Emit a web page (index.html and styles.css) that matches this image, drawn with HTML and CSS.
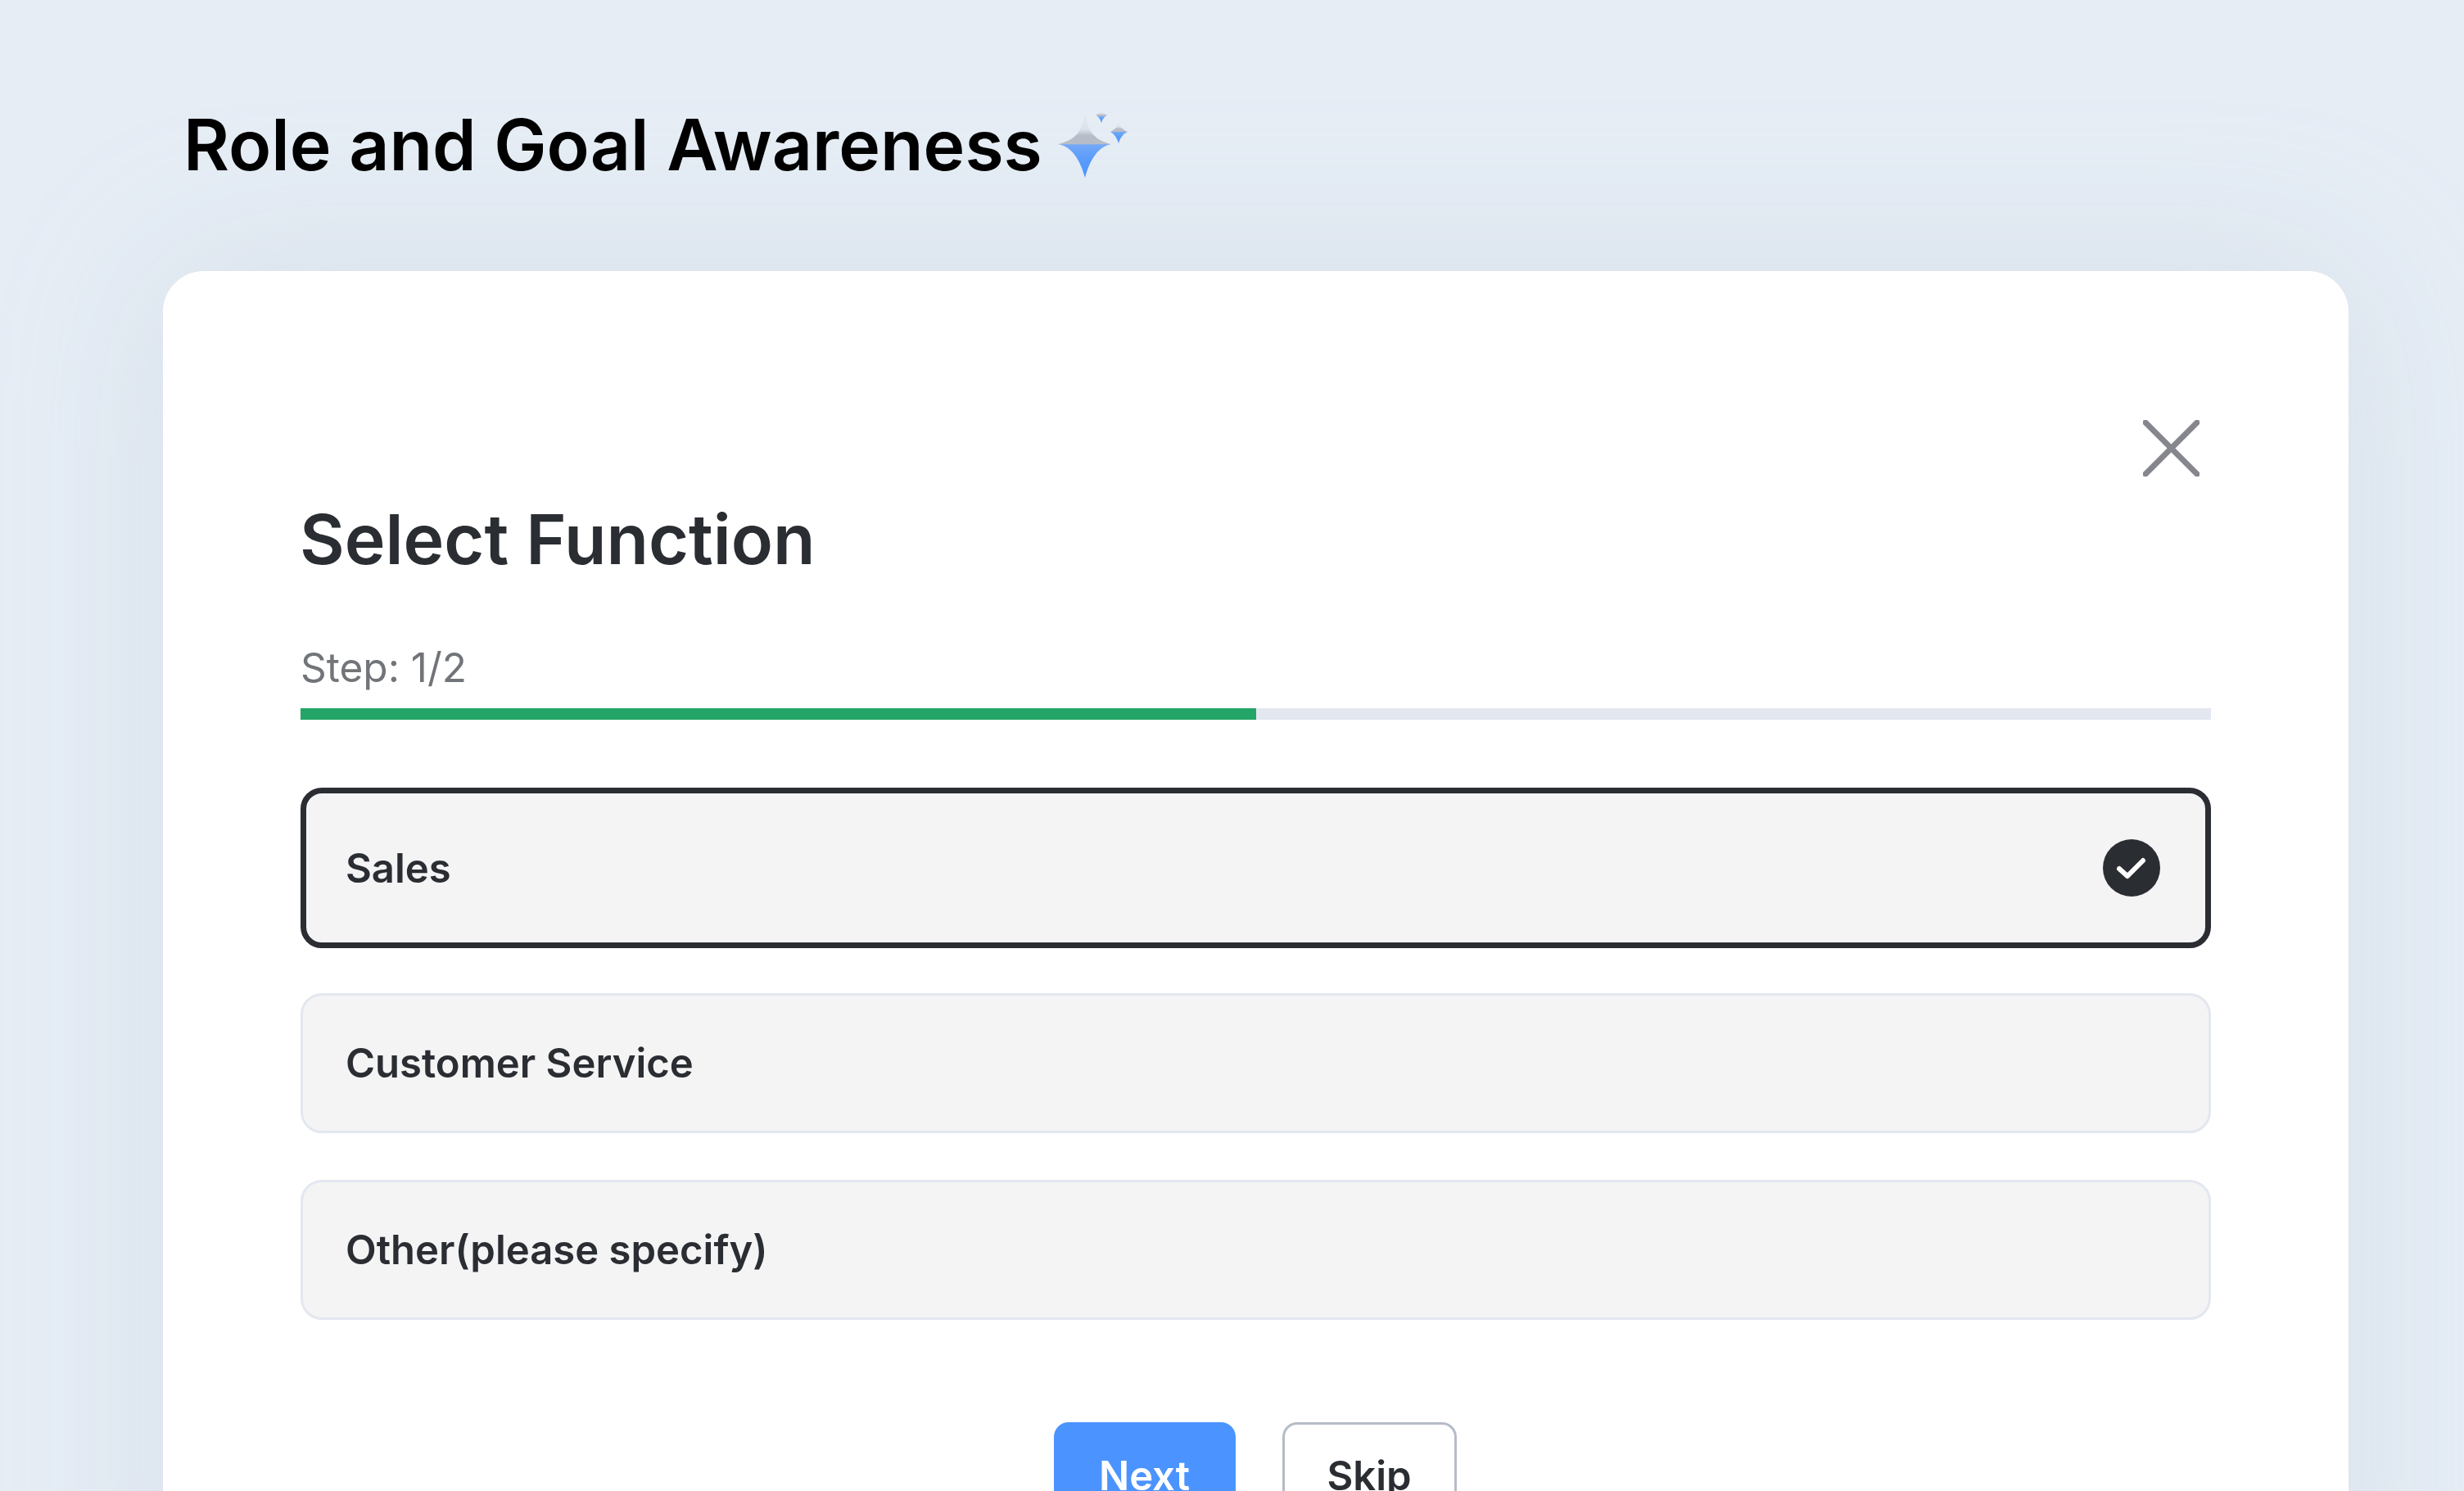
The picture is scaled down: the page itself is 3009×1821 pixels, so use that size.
FILE: index.html
```html
<!DOCTYPE html>
<html lang="en">
<head>
<meta charset="utf-8">
<title>Role and Goal Awareness</title>
<link rel="stylesheet" href="styles.css">
</head>
<body>
<main class="page">
  <header class="page-head">
    <h1 class="page-title">Role and Goal Awareness</h1>
    <svg class="sparkle" width="90" height="87" viewBox="0 0 90 87" aria-hidden="true">
      <defs>
        <linearGradient id="spark" x1="0" y1="0" x2="0" y2="1">
          <stop offset="0" stop-color="#e4e9f0"/>
          <stop offset="0.25" stop-color="#dde2ea"/>
          <stop offset="0.35" stop-color="#b7bdc8"/>
          <stop offset="0.48" stop-color="#b7bdc8"/>
          <stop offset="0.49" stop-color="#74a9f6"/>
          <stop offset="0.72" stop-color="#5a9cfc"/>
          <stop offset="1" stop-color="#4b94ff"/>
        </linearGradient>
      </defs>
      <path fill="url(#spark)" d="M36 5C39 27 47 38 68 43C52 46 42 62 36 84C30 62 20 46 3 43C25 38 33 27 36 5Z"/>
      <path fill="url(#spark)" d="M56 2C57 4 59 6 63 7.500C60 9 57.500 12 56 17C54.500 12 52 9 49 7.500C53 6 55 4 56 2Z"/>
      <path fill="url(#spark)" d="M77 15C78 21 81 25 88 28C83 30 79 35 77 42C75 35 71 30 67 28C73 25 76 21 77 15Z"/>
    </svg>
  </header>

  <section class="card">
    <div class="card-top">
      <svg class="close-icon" width="69" height="69" viewBox="0 0 69 69" aria-hidden="true">
        <path d="M3 3L66 66M66 3L3 66"/>
      </svg>
    </div>
    <h2 class="card-title">Select Function</h2>
    <p class="step-label">Step: 1/2</p>
    <div class="progress"><div class="progress-fill"></div></div>

    <div class="options">
      <div class="option option-selected">
        <span>Sales</span>
        <svg class="check" width="70" height="70" viewBox="0 0 70 70" aria-hidden="true">
          <circle cx="35" cy="35" r="35" fill="#2a2d32"/>
          <path d="M20 36L30 45L49 26" fill="none" stroke="#fff" stroke-width="6" stroke-linecap="round" stroke-linejoin="round"/>
        </svg>
      </div>
      <div class="option">Customer Service</div>
      <div class="option">Other(please specify)</div>
    </div>

    <div class="actions">
      <button class="btn btn-primary" type="button">Next</button>
      <button class="btn btn-secondary" type="button">Skip</button>
    </div>
  </section>
</main>
</body>
</html>
```
FILE: styles.css
```css
* { box-sizing: border-box; }

html, body {
  margin: 0;
  height: 100%;
  overflow: hidden;
}

body {
  background: #e6edf5;
  font-family: Inter, "Liberation Sans", sans-serif;
  color: #2a2d32;
}

.page {
  height: 1821px;
  padding: 130px 141px 0 199px;
  overflow: hidden;
}

.page-head {
  display: flex;
  align-items: flex-start;
  gap: 16px;
  height: 201px;
  padding-left: 25px;
}

.page-title {
  margin: 0;
  font-size: 85.900px;
  font-weight: 600;
  line-height: 94px;
  color: #000;
}

.sparkle {
  flex: none;
  margin-top: 3px;
}

.card {
  width: 2669px;
  height: 1700px;
  padding: 182px 168px 0;
  background: #fff;
  border-radius: 50px;
  box-shadow: 0 0 200px rgba(170, 185, 205, 0.26);
}

.card-top {
  display: flex;
  justify-content: flex-end;
  padding-right: 14px;
  height: 69px;
}

.close-icon path {
  fill: none;
  stroke: #85878c;
  stroke-width: 7;
  stroke-linecap: round;
}

.card-title {
  margin: 26px 0 0 -1px;
  font-size: 84.200px;
  font-weight: 600;
  line-height: 100px;
  color: #2a2d32;
}

.step-label {
  margin: 77px 0 0;
  font-size: 49.500px;
  line-height: 60px;
  color: #717478;
}

.progress {
  height: 14px;
  margin-top: 20px;
  background: #e3e7ef;
}

.progress-fill {
  width: 50%;
  height: 100%;
  background: #22a566;
}

.options {
  display: flex;
  flex-direction: column;
  gap: 57px;
  margin-top: 83px;
}

.option {
  display: flex;
  align-items: center;
  justify-content: space-between;
  height: 171px;
  padding: 0 52px;
  background: #f4f4f5;
  border: 3px solid #e3e7ef;
  border-radius: 26px;
  font-size: 49px;
  font-weight: 600;
}

.option-selected {
  height: 196px;
  margin-bottom: -2px;
  padding: 0 55px 0 48px;
  border: 7px solid #2a2d32;
}

.actions {
  display: flex;
  justify-content: center;
  gap: 57px;
  margin: 125px 2px 0 0;
}

.btn {
  height: 130px;
  padding: 0;
  border-radius: 18px;
  font-family: inherit;
  font-size: 49px;
  font-weight: 600;
}

.btn-primary {
  width: 222px;
  background: #4b94ff;
  border: 0;
  color: #fff;
}

.btn-secondary {
  width: 213px;
  background: #fff;
  border: 3px solid #b5bcc8;
  color: #2a2d32;
}
```
